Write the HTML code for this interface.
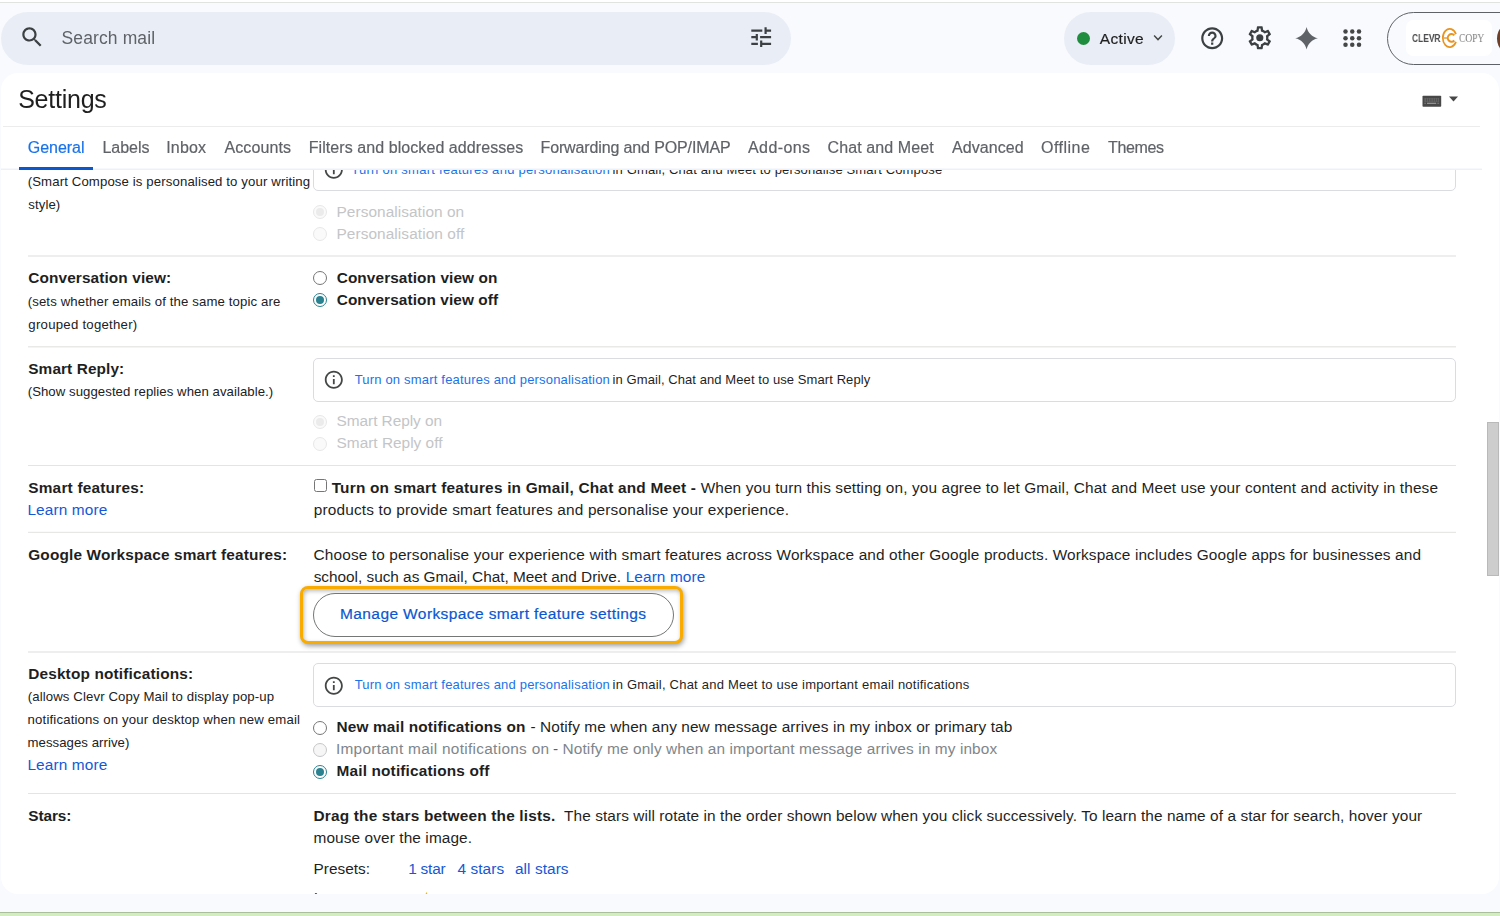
<!DOCTYPE html>
<html lang="en"><head><meta charset="utf-8"><title>Settings - Clevr Copy Mail</title>
<style>
html,body{margin:0;padding:0}
body{width:1500px;height:916px;overflow:hidden;position:relative;background:#f8fafd;font-family:"Liberation Sans",sans-serif;color:#1f1f1f}
.abs,.t,.ln,.box,.rad,svg.ic{position:absolute}
.t{white-space:nowrap;line-height:1;margin:0;font-weight:400;display:block}
.t.med span{-webkit-text-stroke:0.2px currentColor}
.t.sx{will-change:transform}
.t.serif{font-family:"Liberation Serif",serif}
.topwhite{left:0;top:0;width:1500px;height:2px;background:#fff}
.topline{left:0;top:2px;width:1500px;height:1px;background:#e1e3e1}
.search{left:1px;top:12px;width:790px;height:53px;border-radius:27px;background:#e9eef6}
.active{left:1064px;top:12px;width:111px;height:53px;border-radius:27px;background:#e9eef6}
.dot{left:1077px;top:32px;width:13px;height:13px;border-radius:50%;background:#1e8e3e}
.acct{left:1387px;top:12px;width:160px;height:51px;border:1px solid #5f6368;border-radius:27px;background:#f8fafd}
.logo{left:1406px;top:20px;width:86px;height:36px;border-radius:7px;background:#fff}
.avatar{left:1496.5px;top:20.5px;width:35px;height:35px;border-radius:50%;background:#6b3f2a}
.clip{left:0;top:0;width:1500px;height:894px;overflow:hidden}
.toptext{left:0;top:0;width:1500px;height:180px;will-change:transform}
.card{left:1px;top:72.5px;width:1498px;height:821.5px;border-radius:17px;background:#fff;overflow:hidden;}
.ln{height:1px;background:#e3e5e2;left:28px;width:1428px}
.ln.l2{height:2px;background:#eeeeee}
.tabsbg{left:1px;top:127px;width:1486px;height:42px;background:#fff;}
.box{left:313px;width:1141px;height:42px;border:1px solid #dadce0;border-radius:5px;background:#fff;}
.rad{width:12px;height:12px;border:1px solid #767676;border-radius:50%;background:#fff;left:313px;}
.rad.on::after{content:"";position:absolute;left:2px;top:2px;width:8px;height:8px;border-radius:50%;background:#2a8291}
.rad.on{border-color:#2a8291}
.rad.dis{border-color:#e8e8e8;background:#fafafa}
.rad.dis.on::after{background:#ebebeb}
.rad.dim{border-color:#c6c7c9;background:#f6f6f6}
.chk{left:314px;top:479px;width:11px;height:11px;border:1px solid #767676;border-radius:2.5px;background:#fff;}
.ring{left:300px;top:586px;width:377px;height:52px;border:3px solid #f9ab00;border-radius:8px;box-shadow:1px 2px 5px rgba(0,0,0,.38),inset 1px 2px 4px rgba(0,0,0,.28);background:#fff}
.btn{left:313px;top:593px;width:358.500px;height:41.500px;border:1px solid #747775;border-radius:22px;background:#fff}
.scroll{left:1487px;top:422px;width:10px;height:152px;background:#cdcdcd;border:1px solid #b9b9b9}
.green{left:0;top:912px;width:1500px;height:4px;background:#d3ecc0}
.greenln{left:0;top:911.5px;width:1500px;height:1px;background:#a9bf9c}
svg.ic{overflow:visible}
</style></head>
<body>
<div id="root" class="abs" style="left:0;top:0;width:1500px;height:916px;overflow:hidden">
<div class="abs topwhite"></div><div class="abs topline"></div>
<div class="abs search"></div>
<div class="abs active"></div><div class="abs dot"></div>
<div class="abs acct"></div><div class="abs logo"></div><div class="abs avatar"></div>
<div class="abs card"></div>
<div class="abs clip">
<!-- row dividers -->
<div class="ln l2" style="top:255px"></div>
<div class="ln" style="top:346px;background:#e9e9e7"></div><div class="ln" style="top:347px;background:#f4f4f4"></div>
<div class="ln" style="top:465px"></div>
<div class="ln" style="top:531px;background:#fafafa"></div><div class="ln" style="top:532px;background:#e7e7e5"></div>
<div class="ln l2" style="top:651px"></div>
<div class="ln" style="top:793px"></div>
<!-- info boxes -->
<div class="box" style="top:147px"></div>
<div class="box" style="top:358px"></div>
<div class="box" style="top:663px"></div>
<!-- radios -->
<div class="rad dis on" style="top:205px"></div>
<div class="rad dis" style="top:227px"></div>
<div class="rad" style="top:271px"></div>
<div class="rad on" style="top:293px"></div>
<div class="rad dis on" style="top:415px"></div>
<div class="rad dis" style="top:437px"></div>
<div class="rad" style="top:721px"></div>
<div class="rad dim" style="top:742.5px"></div>
<div class="rad on" style="top:764.5px"></div>
<div class="abs chk"></div>
<div class="abs ring"></div><div class="abs btn"></div>
<svg class="ic" style="left:323.200px;top:158.700px" width="21.600" height="21.600" viewBox="0 0 24 24"><path fill="#444746" d="M11 7h2v2h-2zm0 4h2v6h-2zm1-9C6.480 2 2 6.480 2 12s4.480 10 10 10 10-4.480 10-10S17.520 2 12 2zm0 18c-4.410 0-8-3.590-8-8s3.590-8 8-8 8 3.590 8 8-3.590 8-8 8z"/></svg>
<svg class="ic" style="left:323.200px;top:369.200px" width="21.600" height="21.600" viewBox="0 0 24 24"><path fill="#444746" d="M11 7h2v2h-2zm0 4h2v6h-2zm1-9C6.480 2 2 6.480 2 12s4.480 10 10 10 10-4.480 10-10S17.520 2 12 2zm0 18c-4.410 0-8-3.590-8-8s3.590-8 8-8 8 3.590 8 8-3.590 8-8 8z"/></svg>
<svg class="ic" style="left:323.200px;top:674.700px" width="21.600" height="21.600" viewBox="0 0 24 24"><path fill="#444746" d="M11 7h2v2h-2zm0 4h2v6h-2zm1-9C6.480 2 2 6.480 2 12s4.480 10 10 10 10-4.480 10-10S17.520 2 12 2zm0 18c-4.410 0-8-3.590-8-8s3.590-8 8-8 8 3.590 8 8-3.590 8-8 8z"/></svg>
<svg class="ic" style="left:419.200px;top:890.600px" width="15" height="15" viewBox="0 0 24 24"><path fill="#f4b400" d="M12 1.500l3.200 6.900 7.300.9-5.400 5.100 1.400 7.400L12 18.200l-6.500 3.600 1.400-7.400L1.500 9.300l7.300-.9z"/></svg>

<div class="t " id="t16" style="left:27.90px;top:150.50px;font-size:15.4px;letter-spacing:-0.219px"><span style="color:#1f1f1f;font-weight:700">Smart Compose personalisation:</span></div>
<div class="t " id="t17" style="left:27.70px;top:175.01px;font-size:13.2px;letter-spacing:0.119px"><span style="color:#202124">(Smart Compose is personalised to your writing</span></div>
<div class="t " id="t18" style="left:28.34px;top:198.01px;font-size:13.2px;letter-spacing:0.085px"><span style="color:#202124">style)</span></div>
<a class="t " id="t19" style="left:351.18px;top:162.71px;font-size:13px;letter-spacing:0.275px"><span style="color:#1a73e8">Turn on smart features and personalisation</span></a>
<div class="t " id="t20" style="left:612.58px;top:162.71px;font-size:13px;letter-spacing:0.144px"><span style="color:#1f1f1f">in Gmail, Chat and Meet to personalise Smart Compose</span></div>
<div class="t " id="t21" style="left:336.50px;top:204.00px;font-size:15.4px;letter-spacing:0.061px"><span style="color:#c3c5c7">Personalisation on</span></div>
<div class="t " id="t22" style="left:336.50px;top:226.00px;font-size:15.4px;letter-spacing:0.078px"><span style="color:#c3c5c7">Personalisation off</span></div>
<div class="t " id="t23" style="left:28.27px;top:270.00px;font-size:15.4px;letter-spacing:0.104px"><span style="color:#1f1f1f;font-weight:700">Conversation view:</span></div>
<div class="t " id="t24" style="left:27.70px;top:295.01px;font-size:13.2px;letter-spacing:0.120px"><span style="color:#202124">(sets whether emails of the same topic are</span></div>
<div class="t " id="t25" style="left:28.35px;top:318.01px;font-size:13.2px;letter-spacing:0.252px"><span style="color:#202124">grouped together)</span></div>
<div class="t " id="t26" style="left:336.70px;top:270.00px;font-size:15.4px;letter-spacing:0.084px"><span style="color:#1f1f1f;font-weight:700">Conversation view on</span></div>
<div class="t " id="t27" style="left:336.70px;top:292.00px;font-size:15.4px;letter-spacing:0.077px"><span style="color:#1f1f1f;font-weight:700">Conversation view off</span></div>
<div class="t " id="t28" style="left:28.25px;top:361.00px;font-size:15.4px;letter-spacing:0.092px"><span style="color:#1f1f1f;font-weight:700">Smart Reply:</span></div>
<div class="t " id="t29" style="left:27.70px;top:385.30px;font-size:13.2px;letter-spacing:0.054px"><span style="color:#202124">(Show suggested replies when available.)</span></div>
<a class="t " id="t30" style="left:354.63px;top:373.41px;font-size:13px;letter-spacing:0.191px"><span style="color:#1a73e8">Turn on smart features and personalisation</span></a>
<div class="t " id="t31" style="left:612.58px;top:373.41px;font-size:13px;letter-spacing:0.080px"><span style="color:#1f1f1f">in Gmail, Chat and Meet to use Smart Reply</span></div>
<div class="t " id="t32" style="left:336.56px;top:413.20px;font-size:15.4px;letter-spacing:-0.042px"><span style="color:#c3c5c7">Smart Reply on</span></div>
<div class="t " id="t33" style="left:336.56px;top:435.20px;font-size:15.4px;letter-spacing:0.008px"><span style="color:#c3c5c7">Smart Reply off</span></div>
<div class="t " id="t34" style="left:28.25px;top:479.50px;font-size:15.4px;letter-spacing:0.208px"><span style="color:#1f1f1f;font-weight:700">Smart features:</span></div>
<a class="t " id="t35" style="left:27.41px;top:502.00px;font-size:15.4px;letter-spacing:0.127px"><span style="color:#1558d6">Learn more</span></a>
<div class="t " id="t36" style="left:331.66px;top:479.61px;font-size:15.4px;letter-spacing:0.205px"><span style="color:#1f1f1f;font-weight:700">Turn on smart features in Gmail, Chat and Meet -</span></div>
<div class="t " id="t37" style="left:700.63px;top:479.50px;font-size:15.4px;letter-spacing:0.112px"><span style="color:#1f1f1f">When you turn this setting on, you agree to let Gmail, Chat and Meet use your content and activity in these</span></div>
<div class="t " id="t38" style="left:313.85px;top:502.00px;font-size:15.4px;letter-spacing:0.161px"><span style="color:#1f1f1f">products to provide smart features and personalise your experience.</span></div>
<div class="t " id="t39" style="left:28.27px;top:547.00px;font-size:15.4px;letter-spacing:0.137px"><span style="color:#1f1f1f;font-weight:700">Google Workspace smart features:</span></div>
<div class="t " id="t40" style="left:313.61px;top:547.00px;font-size:15.4px;letter-spacing:0.120px"><span style="color:#1f1f1f">Choose to personalise your experience with smart features across Workspace and other Google products. Workspace includes Google apps for businesses and</span></div>
<div class="t " id="t41" style="left:313.71px;top:569.00px;font-size:15.4px;letter-spacing:-0.033px"><span style="color:#1f1f1f">school, such as Gmail, Chat, Meet and Drive.</span></div>
<a class="t " id="t42" style="left:625.66px;top:569.00px;font-size:15.4px;letter-spacing:0.103px"><span style="color:#1558d6">Learn more</span></a>
<a class="t med" id="t43" style="left:340.02px;top:606.32px;font-size:15.5px;letter-spacing:0.397px"><span style="color:#0b57d0">Manage Workspace smart feature settings</span></a>
<div class="t " id="t44" style="left:28.21px;top:666.31px;font-size:15.4px;letter-spacing:0.157px"><span style="color:#1f1f1f;font-weight:700">Desktop notifications:</span></div>
<div class="t " id="t45" style="left:27.70px;top:690.30px;font-size:13.2px;letter-spacing:0.113px"><span style="color:#202124">(allows Clevr Copy Mail to display pop-up</span></div>
<div class="t " id="t46" style="left:27.60px;top:713.30px;font-size:13.2px;letter-spacing:0.163px"><span style="color:#202124">notifications on your desktop when new email</span></div>
<div class="t " id="t47" style="left:27.60px;top:736.21px;font-size:13.2px;letter-spacing:0.036px"><span style="color:#202124">messages arrive)</span></div>
<a class="t " id="t48" style="left:27.41px;top:757.00px;font-size:15.4px;letter-spacing:0.127px"><span style="color:#1558d6">Learn more</span></a>
<a class="t " id="t49" style="left:354.63px;top:678.10px;font-size:13px;letter-spacing:0.191px"><span style="color:#1a73e8">Turn on smart features and personalisation</span></a>
<div class="t " id="t50" style="left:612.58px;top:678.10px;font-size:13px;letter-spacing:0.214px"><span style="color:#1f1f1f">in Gmail, Chat and Meet to use important email notifications</span></div>
<div class="t " id="t51" style="left:336.53px;top:719.31px;font-size:15.4px;letter-spacing:0.135px"><span style="color:#1f1f1f;font-weight:700">New mail notifications on</span></div>
<div class="t " id="t52" style="left:530.49px;top:719.31px;font-size:15.4px;letter-spacing:0.095px"><span style="color:#1f1f1f">- Notify me when any new message arrives in my inbox or primary tab</span></div>
<div class="t " id="t53" style="left:335.90px;top:741.00px;font-size:15.4px;letter-spacing:0.290px"><span style="color:#80868b">Important mail notifications on</span></div>
<div class="t " id="t54" style="left:552.92px;top:741.00px;font-size:15.4px;letter-spacing:0.117px"><span style="color:#5f6368">- </span><span style="color:#80868b">Notify me only when an important message arrives in my inbox</span></div>
<div class="t " id="t55" style="left:336.53px;top:762.50px;font-size:15.4px;letter-spacing:0.153px"><span style="color:#1f1f1f;font-weight:700">Mail notifications off</span></div>
<div class="t " id="t56" style="left:28.25px;top:807.81px;font-size:15.4px;letter-spacing:-0.093px"><span style="color:#1f1f1f;font-weight:700">Stars:</span></div>
<div class="t " id="t57" style="left:313.53px;top:808.00px;font-size:15.4px;letter-spacing:0.179px"><span style="color:#1f1f1f;font-weight:700">Drag the stars between the lists.</span></div>
<div class="t " id="t58" style="left:564.06px;top:808.00px;font-size:15.4px;letter-spacing:0.081px"><span style="color:#1f1f1f">The stars will rotate in the order shown below when you click successively. To learn the name of a star for search, hover your</span></div>
<div class="t " id="t59" style="left:313.53px;top:829.70px;font-size:15.4px;letter-spacing:0.099px"><span style="color:#1f1f1f">mouse over the image.</span></div>
<div class="t " id="t60" style="left:313.50px;top:861.00px;font-size:15.4px;letter-spacing:0.016px"><span style="color:#1f1f1f">Presets:</span></div>
<a class="t " id="t61" style="left:408.18px;top:861.00px;font-size:15.4px;letter-spacing:-0.199px"><span style="color:#1558d6">1 star</span></a>
<a class="t " id="t62" style="left:457.48px;top:861.00px;font-size:15.4px;letter-spacing:0.075px"><span style="color:#1558d6">4 stars</span></a>
<a class="t " id="t63" style="left:514.94px;top:861.00px;font-size:15.4px;letter-spacing:0.073px"><span style="color:#1558d6">all stars</span></a>
<div class="t " id="t64" style="left:313.80px;top:890.31px;font-size:15.4px;letter-spacing:0.142px"><span style="color:#1f1f1f">In use:</span></div>
</div>
<!-- header of card -->
<div class="abs tabsbg"></div>
<div class="ln" style="left:3px;width:1477px;top:126px;background:#ececec"></div>
<div class="ln" style="left:1px;width:1481px;top:168px;background:#f7f8fb"></div><div class="ln" style="left:1px;width:1481px;top:169px;background:#eef1f4"></div>
<div class="abs" style="left:19px;top:167px;width:74px;height:3px;background:#0b57d0"></div>
<div class="abs scroll"></div>
<div class="abs green"></div><div class="abs greenln"></div>
<svg class="ic" style="left:18.7px;top:24px" width="26.4" height="26.4" viewBox="0 0 24 24"><path fill="#3c4043" d="M15.5 14h-.79l-.28-.27C15.41 12.59 16 11.11 16 9.500 16 5.910 13.090 3 9.500 3S3 5.910 3 9.500 5.910 16 9.500 16c1.610 0 3.090-.59 4.230-1.570l.27.28v.79l5 4.990L20.490 19l-4.990-5zm-6 0C7.010 14 5 11.990 5 9.500S7.010 5 9.500 5 14 7.010 14 9.500 11.990 14 9.500 14z"/></svg>
<svg class="ic" style="left:747.8px;top:24px" width="26.4" height="26.4" viewBox="0 0 24 24"><path fill="#3c4043" d="M3 17v2h6v-2H3zM3 5v2h10V5H3zm10 16v-2h8v-2h-8v-2h-2v6h2zM7 9v2H3v2h4v2h2V9H7zm14 4v-2H11v2h10zm-6-4h2V7h4V5h-4V3h-2v6z"/></svg>
<svg class="ic" style="left:1152px;top:33px" width="12" height="9" viewBox="0 0 12 9"><path d="M2.100 2.400 L6 6.600 L9.900 2.400" fill="none" stroke="#444746" stroke-width="1.400"/></svg>
<svg class="ic" style="left:1198.800px;top:24.800px" width="26.4" height="26.4" viewBox="0 0 24 24"><path fill="#3c4043" d="M11 18h2v-2h-2v2zm1-16C6.480 2 2 6.480 2 12s4.480 10 10 10 10-4.480 10-10S17.520 2 12 2zm0 18c-4.410 0-8-3.590-8-8s3.590-8 8-8 8 3.590 8 8-3.590 8-8 8zm0-14c-2.210 0-4 1.790-4 4h2c0-1.100.9-2 2-2s2 .9 2 2c0 2-3 1.750-3 5h2c0-2.250 3-2.500 3-5 0-2.210-1.790-4-4-4z"/></svg>
<svg class="ic" style="left:1246px;top:24.400px" width="27.600" height="27.600" viewBox="0 0 24 24"><path fill="#3c4043" d="M19.430 12.980c.04-.32.07-.64.07-.98 0-.34-.03-.66-.07-.98l2.110-1.650c.19-.15.24-.42.12-.64l-2-3.460c-.09-.16-.26-.25-.44-.25-.06 0-.12.010-.17.030l-2.490 1c-.52-.4-1.080-.73-1.690-.98l-.38-2.650C14.460 2.180 14.250 2 14 2h-4c-.25 0-.46.18-.49.42l-.38 2.650c-.61.25-1.170.59-1.690.98l-2.490-1c-.06-.02-.12-.03-.18-.03-.17 0-.34.09-.43.25l-2 3.460c-.13.22-.07.49.12.64l2.110 1.650c-.04.32-.07.65-.07.980 0 .33.03.66.07.98l-2.110 1.650c-.19.15-.24.42-.12.64l2 3.460c.09.16.26.25.44.25.06 0 .12-.01.17-.03l2.490-1c.52.4 1.080.73 1.690.98l.38 2.650c.03.24.24.42.49.42h4c.25 0 .46-.18.490-.42l.38-2.650c.61-.25 1.170-.59 1.690-.98l2.490 1c.06.020.12.030.18.030.17 0 .34-.09.43-.25l2-3.460c.12-.22.070-.49-.12-.64l-2.110-1.650zm-1.980-1.710c.04.31.050.52.050.73 0 .21-.02.43-.05.73l-.14 1.130.89.700 1.080.84-.7 1.210-1.270-.51-1.040-.42-.9.680c-.43.32-.84.560-1.250.730l-1.060.43-.16 1.130-.2 1.350h-1.400l-.19-1.350-.16-1.130-1.060-.43c-.43-.18-.83-.41-1.230-.71l-.91-.7-1.060.43-1.270.51-.7-1.210 1.080-.84.890-.7-.14-1.130c-.03-.31-.05-.54-.05-.74s.02-.43.050-.73l.14-1.130-.89-.7-1.080-.84.700-1.210 1.270.51 1.040.42.900-.68c.43-.32.840-.56 1.250-.73l1.060-.43.160-1.130.2-1.350h1.390l.19 1.350.16 1.130 1.060.43c.43.18.83.410 1.230.710l.91.700 1.060-.43 1.270-.51.700 1.210-1.070.85-.89.700.14 1.130z"/><circle cx="12" cy="12" r="3.100" fill="#3c4043"/></svg>
<svg class="ic" style="left:1294.900px;top:26.900px" width="23.200" height="22.600" viewBox="0 0 24 24"><path fill="#5f6368" d="M12 0C13.200 6 18 10.800 24 12 18 13.200 13.200 18 12 24 10.800 18 6 13.200 0 12 6 10.800 10.800 6 12 0Z"/></svg>
<svg class="ic" style="left:1343px;top:29.300px" width="19" height="19" viewBox="0 0 19 19"><g fill="#444746"><circle cx="2.500" cy="2.500" r="2.250"/><circle cx="9.250" cy="2.500" r="2.250"/><circle cx="16" cy="2.500" r="2.250"/><circle cx="2.500" cy="9.200" r="2.250"/><circle cx="9.250" cy="9.200" r="2.250"/><circle cx="16" cy="9.200" r="2.250"/><circle cx="2.500" cy="15.800" r="2.250"/><circle cx="9.250" cy="15.800" r="2.250"/><circle cx="16" cy="15.800" r="2.250"/></g></svg>
<svg class="ic" style="left:1440px;top:27px" width="20" height="22" viewBox="0 0 20 22"><g fill="none" stroke="#e8941f" stroke-linecap="butt"><path d="M15.950 7.150 A6.900 9.100 0 1 0 15.950 14.850" stroke-width="1.700"/><path d="M14.300 8.300 A3.700 3.900 0 1 0 14.300 13.500" stroke-width="2"/><path d="M3.300 11 H7.800" stroke-width="1.300"/></g></svg>
<svg class="ic" style="left:1422px;top:95px" width="38" height="13" viewBox="0 0 38 13"><rect x="0.500" y="0.700" width="18.700" height="11.100" rx="0.800" fill="#484848"/><g fill="#7d7d7d"><rect x="2.300" y="3.500" width="14.800" height="1"/><rect x="2.300" y="5.500" width="14.800" height="1"/><rect x="2.300" y="7.700" width="1.600" height="1.100"/><rect x="5" y="7.700" width="9.200" height="1.200" fill="#9a9a9a"/><rect x="15.300" y="7.700" width="1.800" height="1.100"/></g><g fill="#484848"><rect x="4" y="3.400" width=".7" height="3.200"/><rect x="6.300" y="3.400" width=".7" height="3.200"/><rect x="8.600" y="3.400" width=".7" height="3.200"/><rect x="10.900" y="3.400" width=".7" height="3.200"/><rect x="13.200" y="3.400" width=".7" height="3.200"/><rect x="15.300" y="3.400" width=".7" height="3.200"/></g><path d="M27 1.600h9l-4.500 5z" fill="#484848"/></svg>

<div class="abs toptext">
<div class="t " id="t0" style="left:61.50px;top:29.70px;font-size:17.5px;letter-spacing:0.123px"><span style="color:#5f6368">Search mail</span></div>
<div class="t med" id="t1" style="left:1099.77px;top:30.71px;font-size:15.5px;letter-spacing:0.352px"><span style="color:#1f1f1f">Active</span></div>
<h2 class="t " id="t2" style="left:18.15px;top:87.00px;font-size:25px;letter-spacing:-0.233px"><span style="color:#1f1f1f">Settings</span></h2>
<div class="t sx" id="t3" style="left:1412.20px;top:32.90px;font-size:11.2px;transform:scaleX(0.7515);transform-origin:0 0"><span style="color:#4d4d4f;font-weight:700">CLEVR</span></div>
<div class="t sx serif" id="t4" style="left:1458.80px;top:31.91px;font-size:12px;transform:scaleX(0.7902);transform-origin:0 0"><span style="color:#7d7d7d">COPY</span></div>
<a class="t med" id="t5" style="left:27.71px;top:139.81px;font-size:16px;letter-spacing:-0.017px"><span style="color:#1a73e8">General</span></a>
<a class="t med" id="t6" style="left:102.50px;top:139.81px;font-size:16px;letter-spacing:-0.026px"><span style="color:#5f6368">Labels</span></a>
<a class="t med" id="t7" style="left:166.18px;top:139.81px;font-size:16px;letter-spacing:0.198px"><span style="color:#5f6368">Inbox</span></a>
<a class="t med" id="t8" style="left:224.41px;top:139.81px;font-size:16px;letter-spacing:0.121px"><span style="color:#5f6368">Accounts</span></a>
<a class="t med" id="t9" style="left:308.76px;top:139.81px;font-size:16px;letter-spacing:0.069px"><span style="color:#5f6368">Filters and blocked addresses</span></a>
<a class="t med" id="t10" style="left:540.50px;top:139.81px;font-size:16px;letter-spacing:-0.129px"><span style="color:#5f6368">Forwarding and POP/IMAP</span></a>
<a class="t med" id="t11" style="left:748.03px;top:139.81px;font-size:16px;letter-spacing:0.400px"><span style="color:#5f6368">Add-ons</span></a>
<a class="t med" id="t12" style="left:827.50px;top:139.81px;font-size:16px;letter-spacing:0.109px"><span style="color:#5f6368">Chat and Meet</span></a>
<a class="t med" id="t13" style="left:952.04px;top:139.81px;font-size:16px;letter-spacing:0.069px"><span style="color:#5f6368">Advanced</span></a>
<a class="t med" id="t14" style="left:1040.94px;top:139.81px;font-size:16px;letter-spacing:0.493px"><span style="color:#5f6368">Offline</span></a>
<a class="t med" id="t15" style="left:1108.03px;top:139.81px;font-size:16px;letter-spacing:-0.345px"><span style="color:#5f6368">Themes</span></a>
</div>
</div>
</body></html>
